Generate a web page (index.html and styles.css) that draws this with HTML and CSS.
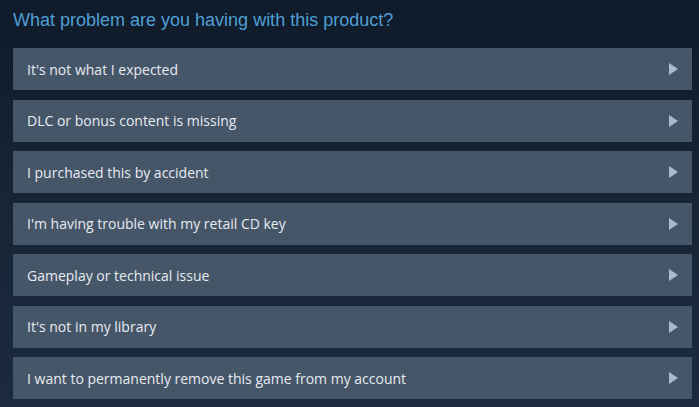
FILE: index.html
```html
<!DOCTYPE html>
<html lang="en">
<head>
<meta charset="utf-8">
<title>Help</title>
<link rel="stylesheet" href="styles.css">
</head>
<body>
<main class="help">
  <h2 class="help-title">What problem are you having with this product?</h2>
  <ul class="options">
    <li class="option"><span class="option-label">It's not what I expected</span><span class="arrow"></span></li>
    <li class="option"><span class="option-label">DLC or bonus content is missing</span><span class="arrow"></span></li>
    <li class="option"><span class="option-label">I purchased this by accident</span><span class="arrow"></span></li>
    <li class="option"><span class="option-label">I'm having trouble with my retail CD key</span><span class="arrow"></span></li>
    <li class="option"><span class="option-label">Gameplay or technical issue</span><span class="arrow"></span></li>
    <li class="option"><span class="option-label">It's not in my library</span><span class="arrow"></span></li>
    <li class="option"><span class="option-label">I want to permanently remove this game from my account</span><span class="arrow"></span></li>
  </ul>
</main>
</body>
</html>
```

FILE: styles.css
```css
html, body {
  margin: 0;
  height: 100%;
}

body {
  background: linear-gradient(180deg, #0f1a2a 0%, #162436 45%, #1b2a3d 100%);
  font-family: "Liberation Sans", Arial, sans-serif;
  overflow: hidden;
}

.help {
  padding: 8px 7px 0 13px;
}

.help-title {
  margin: 0 0 16px;
  font-size: 18px;
  font-weight: normal;
  line-height: 24px;
  color: #4f9fd4;
}

.options {
  list-style: none;
  margin: 0;
  padding: 0;
  display: flex;
  flex-direction: column;
  gap: 9.5px;
}

.option {
  height: 42px;
  background: #465669;
  display: flex;
  align-items: center;
  justify-content: space-between;
  padding: 0 14px;
  color: #e6ebf0;
  font-family: "Open Sans", "Liberation Sans", Arial, sans-serif;
  font-size: 14px;
}

.arrow {
  width: 0;
  height: 0;
  border-top: 6.5px solid transparent;
  border-bottom: 6.5px solid transparent;
  border-left: 9px solid #a7bad2;
}
```
